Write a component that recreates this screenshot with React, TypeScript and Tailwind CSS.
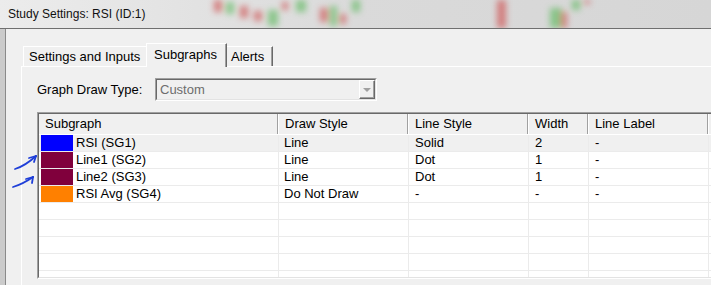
import React from "react";

const rows = [
  { name: "RSI (SG1)", swatch: "bg-[#0000ff]", draw: "Line", style: "Solid", width: "2", label: "-" },
  { name: "Line1 (SG2)", swatch: "bg-[#80003c]", draw: "Line", style: "Dot", width: "1", label: "-" },
  { name: "Line2 (SG3)", swatch: "bg-[#80003c]", draw: "Line", style: "Dot", width: "1", label: "-" },
  { name: "RSI Avg (SG4)", swatch: "bg-[#ff8000]", draw: "Do Not Draw", style: "-", width: "-", label: "-" },
];

function TitleBlur() {
  // blurred chart candles seen through the glass title bar
  const candles: [number, number, number, number, string][] = [
    [214, 0, 8, 12, "#cf5656"],
    [226, 2, 8, 12, "#66bb66"],
    [240, 6, 8, 12, "#cf5656"],
    [254, 11, 8, 10, "#cf5656"],
    [268, 10, 10, 16, "#66bb66"],
    [282, 2, 6, 8, "#cf5656"],
    [296, 0, 10, 12, "#66bb66"],
    [320, 8, 8, 14, "#cf5656"],
    [330, 6, 7, 20, "#66bb66"],
    [340, 14, 6, 10, "#cf5656"],
    [352, 0, 8, 12, "#66bb66"],
    [497, 0, 9, 28, "#cf5656"],
    [550, 8, 12, 20, "#66bb66"],
    [561, 12, 6, 16, "#cf5656"],
    [572, 0, 8, 10, "#66bb66"],
    [584, 0, 6, 4, "#cf5656"],
  ];
  return (
    <svg className="absolute inset-0" width="711" height="28">
      <defs>
        <filter id="soft" filterUnits="userSpaceOnUse" x="0" y="-20" width="711" height="68">
          <feGaussianBlur stdDeviation="3" />
        </filter>
      </defs>
      <g filter="url(#soft)" opacity="0.7">
        {candles.map(([x, y, w, h, c], i) => (
          <rect key={i} x={x} y={y} width={w} height={h} fill={c} />
        ))}
      </g>
    </svg>
  );
}

function Arrows() {
  return (
    <svg className="absolute left-0 top-[150px]" width="42" height="42" viewBox="0 150 42 42">
      <g fill="none" stroke="#1f3fd8" strokeWidth="1.8" strokeLinecap="round" strokeLinejoin="round">
        <path d="M15 169 Q25 166 36 156" />
        <path d="M36 156 L29 158" />
        <path d="M36 156 L34 162" />
        <path d="M13 187 Q23 184 33 177" />
        <path d="M33 177 L26 179" />
        <path d="M33 177 L32 183" />
      </g>
    </svg>
  );
}

export default function App() {
  return (
    <div className="relative w-[711px] h-[285px] overflow-hidden bg-[#f0f0f0] font-['Liberation_Sans',Arial,sans-serif] text-[13px] text-black">
      <div className="relative h-[29px] overflow-hidden border-b border-[#6f6f6f] bg-gradient-to-r from-[#ececec] via-[#dadada] to-[#d6d6d6]">
        <TitleBlur />
        <div className="relative flex h-full items-center pl-[8px] text-[12px] text-[#111]">
          Study Settings: RSI (ID:1)
        </div>
      </div>

      <div className="flex h-[256px]">
        <div className="w-[6px] shrink-0 bg-[#cbcbcb] border-r border-[#8a8a8a]" />
        <div className="flex-1 pl-[15px] pt-[14px]">
          <div className="relative z-10 flex h-[23px] items-end pl-[2px]">
            <div className="flex h-[20px] w-[123px] items-center border-t border-l border-white pl-[5px]">
              Settings and Inputs
            </div>
            <div className="-mb-px flex h-[24px] w-[81px] items-center border-t border-l border-r border-t-white border-l-white border-r-[#696969] bg-[#f0f0f0] pb-[2px] pl-[7px] shadow-[inset_-1px_0_0_#a0a0a0]">
              Subgraphs
            </div>
            <div className="flex h-[20px] w-[46px] items-center border-t border-r border-t-white border-r-[#696969] pl-[4px] shadow-[inset_-1px_0_0_#a0a0a0]">
              Alerts
            </div>
          </div>

          <div className="h-[300px] border-t border-l border-white pl-[15px] pt-[11px]">
            <div className="flex items-center">
              <div className="w-[118px]">Graph Draw Type:</div>
              <div className="h-[23px] w-[222px] border border-t-[#a0a0a0] border-l-[#a0a0a0] border-b-white border-r-white">
                <div className="flex h-full border border-t-[#696969] border-l-[#696969] border-b-[#e3e3e3] border-r-[#e3e3e3] bg-[#f0f0f0]">
                  <div className="flex flex-1 items-center pl-[3px] text-[#6d6d6d]">Custom</div>
                  <div className="flex w-[16px] items-center justify-center border border-t-white border-l-white border-b-[#696969] border-r-[#696969] shadow-[inset_-1px_-1px_0_#a0a0a0]">
                    <div className="h-0 w-0 border-l-[4px] border-r-[4px] border-t-[4px] border-l-transparent border-r-transparent border-t-[#a0a0a0]" />
                  </div>
                </div>
              </div>
            </div>

            <div className="mt-[11px] h-[167px] w-[760px] border-t border-l border-b border-t-[#a0a0a0] border-l-[#a0a0a0] border-b-white">
              <div className="h-full overflow-hidden border-t border-l border-b border-t-[#696969] border-l-[#696969] border-b-[#e3e3e3] bg-white">
                <div className="flex h-[21px] border-b border-white bg-[#f0f0f0]">
                  <div className="flex w-[239px] shrink-0 items-center border-r border-[#a0a0a0] pl-[6px]">Subgraph</div>
                  <div className="flex w-[130px] shrink-0 items-center border-r border-[#a0a0a0] pl-[7px] shadow-[inset_1px_0_0_#fff]">Draw Style</div>
                  <div className="flex w-[120px] shrink-0 items-center border-r border-[#a0a0a0] pl-[7px] shadow-[inset_1px_0_0_#fff]">Line Style</div>
                  <div className="flex w-[60px] shrink-0 items-center border-r border-[#a0a0a0] pl-[7px] shadow-[inset_1px_0_0_#fff]">Width</div>
                  <div className="flex w-[120px] shrink-0 items-center border-r border-[#a0a0a0] pl-[7px] shadow-[inset_1px_0_0_#fff]">Line Label</div>
                  <div className="flex w-[80px] shrink-0 items-center pl-[7px] shadow-[inset_1px_0_0_#fff]" />
                </div>

                {rows.map((r, i) => (
                  <div key={r.name} className={`flex h-[17px] border-b border-[#ebebeb] ${i === 0 ? "bg-[#f0f0f0]" : "bg-white"}`}>
                    <div className="flex w-[240px] shrink-0 items-center border-r border-[#ebebeb] pl-[2px]">
                      <div className={`h-[16px] w-[32px] ${r.swatch}`} />
                      <span className="pl-[3px]">{r.name}</span>
                    </div>
                    <div className="flex w-[130px] shrink-0 items-center border-r border-[#ebebeb] pl-[5px]">{r.draw}</div>
                    <div className="flex w-[120px] shrink-0 items-center border-r border-[#ebebeb] pl-[6px]">{r.style}</div>
                    <div className="flex w-[60px] shrink-0 items-center border-r border-[#ebebeb] pl-[6px]">{r.width}</div>
                    <div className="flex w-[120px] shrink-0 items-center border-r border-[#ebebeb] pl-[6px]">{r.label}</div>
                    <div className="w-[80px] shrink-0" />
                  </div>
                ))}

                {[0, 1, 2, 3, 4].map((i) => (
                  <div key={i} className="flex h-[17px] border-b border-[#ebebeb]">
                    <div className="w-[240px] shrink-0 border-r border-[#ebebeb]" />
                    <div className="w-[130px] shrink-0 border-r border-[#ebebeb]" />
                    <div className="w-[120px] shrink-0 border-r border-[#ebebeb]" />
                    <div className="w-[60px] shrink-0 border-r border-[#ebebeb]" />
                    <div className="w-[120px] shrink-0 border-r border-[#ebebeb]" />
                    <div className="w-[80px] shrink-0" />
                  </div>
                ))}
              </div>
            </div>
          </div>
        </div>
      </div>

      <Arrows />
    </div>
  );
}
